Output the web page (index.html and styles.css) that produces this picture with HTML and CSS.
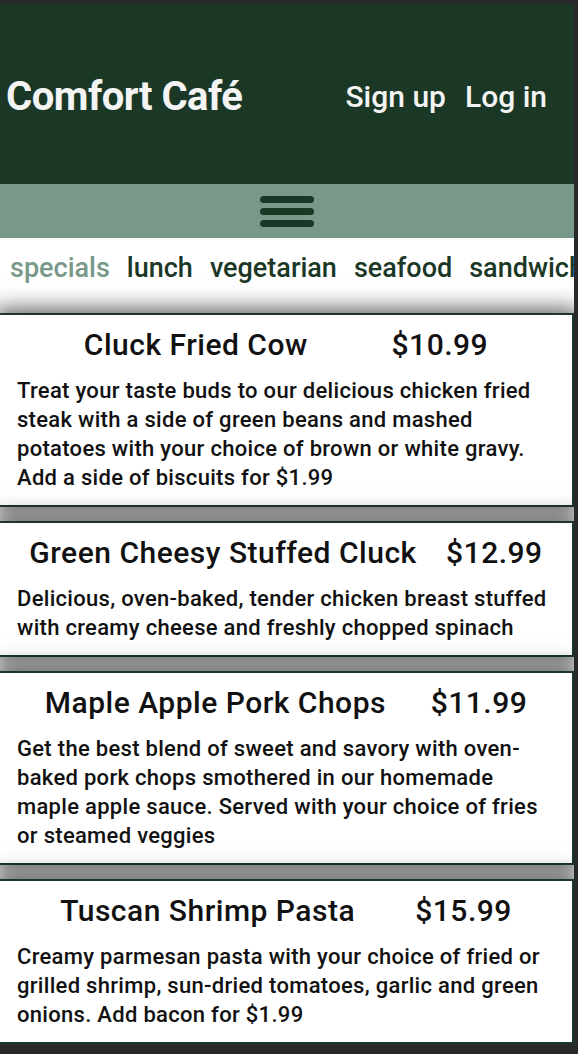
FILE: index.html
```html
<!DOCTYPE html>
<html lang="en">
<head>
<meta charset="utf-8">
<title>Comfort Café</title>
<link rel="stylesheet" href="styles.css">
</head>
<body>
<header class="top">
  <h1 class="logo">Comfort Café</h1>
  <nav class="account">
    <a href="#">Sign up</a>
    <a href="#">Log in</a>
  </nav>
</header>
<div class="menu-bar">
  <button class="burger" aria-label="menu"><span></span><span></span><span></span></button>
</div>
<nav class="categories">
  <a href="#" class="active">specials</a>
  <a href="#">lunch</a>
  <a href="#">vegetarian</a>
  <a href="#">seafood</a>
  <a href="#">sandwiches</a>
</nav>
<main class="menu">
  <article class="item">
    <div class="item-head"><h2>Cluck Fried Cow</h2><span class="price">$10.99</span></div>
    <p>Treat your taste buds to our delicious chicken fried steak with a side of green beans and mashed potatoes with your choice of brown or white gravy. Add a side of biscuits for $1.99</p>
  </article>
  <article class="item">
    <div class="item-head"><h2>Green Cheesy Stuffed Cluck</h2><span class="price">$12.99</span></div>
    <p>Delicious, oven-baked, tender chicken breast stuffed with creamy cheese and freshly chopped spinach</p>
  </article>
  <article class="item">
    <div class="item-head"><h2>Maple Apple Pork Chops</h2><span class="price">$11.99</span></div>
    <p>Get the best blend of sweet and savory with oven-baked pork chops smothered in our homemade maple apple sauce. Served with your choice of fries or steamed veggies</p>
  </article>
  <article class="item">
    <div class="item-head"><h2>Tuscan Shrimp Pasta</h2><span class="price">$15.99</span></div>
    <p>Creamy parmesan pasta with your choice of fried or grilled shrimp, sun-dried tomatoes, garlic and green onions. Add bacon for $1.99</p>
  </article>
</main>
</body>
</html>
```

FILE: styles.css
```css
html {
  background: #27292b;
}

body {
  margin: 4px 4px 0 0;
  background: #ffffff;
  font-family: Roboto, "Noto Sans", sans-serif;
  overflow-x: hidden;
}

.top {
  height: 180px;
  background: #1b3826;
  color: #f4f4f4;
  display: flex;
  align-items: center;
  justify-content: space-between;
  padding: 4px 27px 0 6px;
  box-sizing: border-box;
}

.logo {
  margin: 0;
  font-size: 40px;
  font-weight: 700;
  letter-spacing: -0.5px;
}

.account {
  display: flex;
  gap: 19px;
}

.account a {
  color: #f4f4f4;
  text-decoration: none;
  font-size: 30px;
  font-weight: 500;
}

.menu-bar {
  height: 54px;
  background: #78998a;
  display: flex;
  align-items: center;
  justify-content: center;
}

.burger {
  display: flex;
  flex-direction: column;
  gap: 5px;
  padding: 0;
  border: 0;
  background: none;
}

.burger span {
  display: block;
  width: 54px;
  height: 7px;
  border-radius: 4px;
  background: #1b3826;
}

.categories {
  height: 75px;
  display: flex;
  gap: 17px;
  padding: 13px 10px 0;
  box-sizing: border-box;
  white-space: nowrap;
  overflow: hidden;
}

.categories a {
  color: #1b3826;
  text-decoration: none;
  font-size: 27px;
  font-weight: 500;
  line-height: 34px;
}

.categories a.active {
  color: #78998a;
}

.menu {
  display: flex;
  flex-direction: column;
  gap: 14px;
}

.item {
  background: #ffffff;
  border: 2px solid #1b3826;
  border-left: 0;
  box-shadow: 0 0 20px 5px rgba(0, 0, 0, 0.6);
  padding: 12px 14px 13px 17px;
}

.item-head {
  display: flex;
  justify-content: space-evenly;
  margin: 0 -14px 13px -17px;
  font-size: 30px;
  font-weight: 500;
  letter-spacing: 0.5px;
  line-height: 36px;
  color: #111111;
}

.item-head h2 {
  margin: 0;
  font-size: inherit;
  font-weight: inherit;
}

.item p {
  margin: 0;
  font-size: 22px;
  font-weight: 500;
  letter-spacing: 0.3px;
  line-height: 29px;
  color: #111111;
}
```
